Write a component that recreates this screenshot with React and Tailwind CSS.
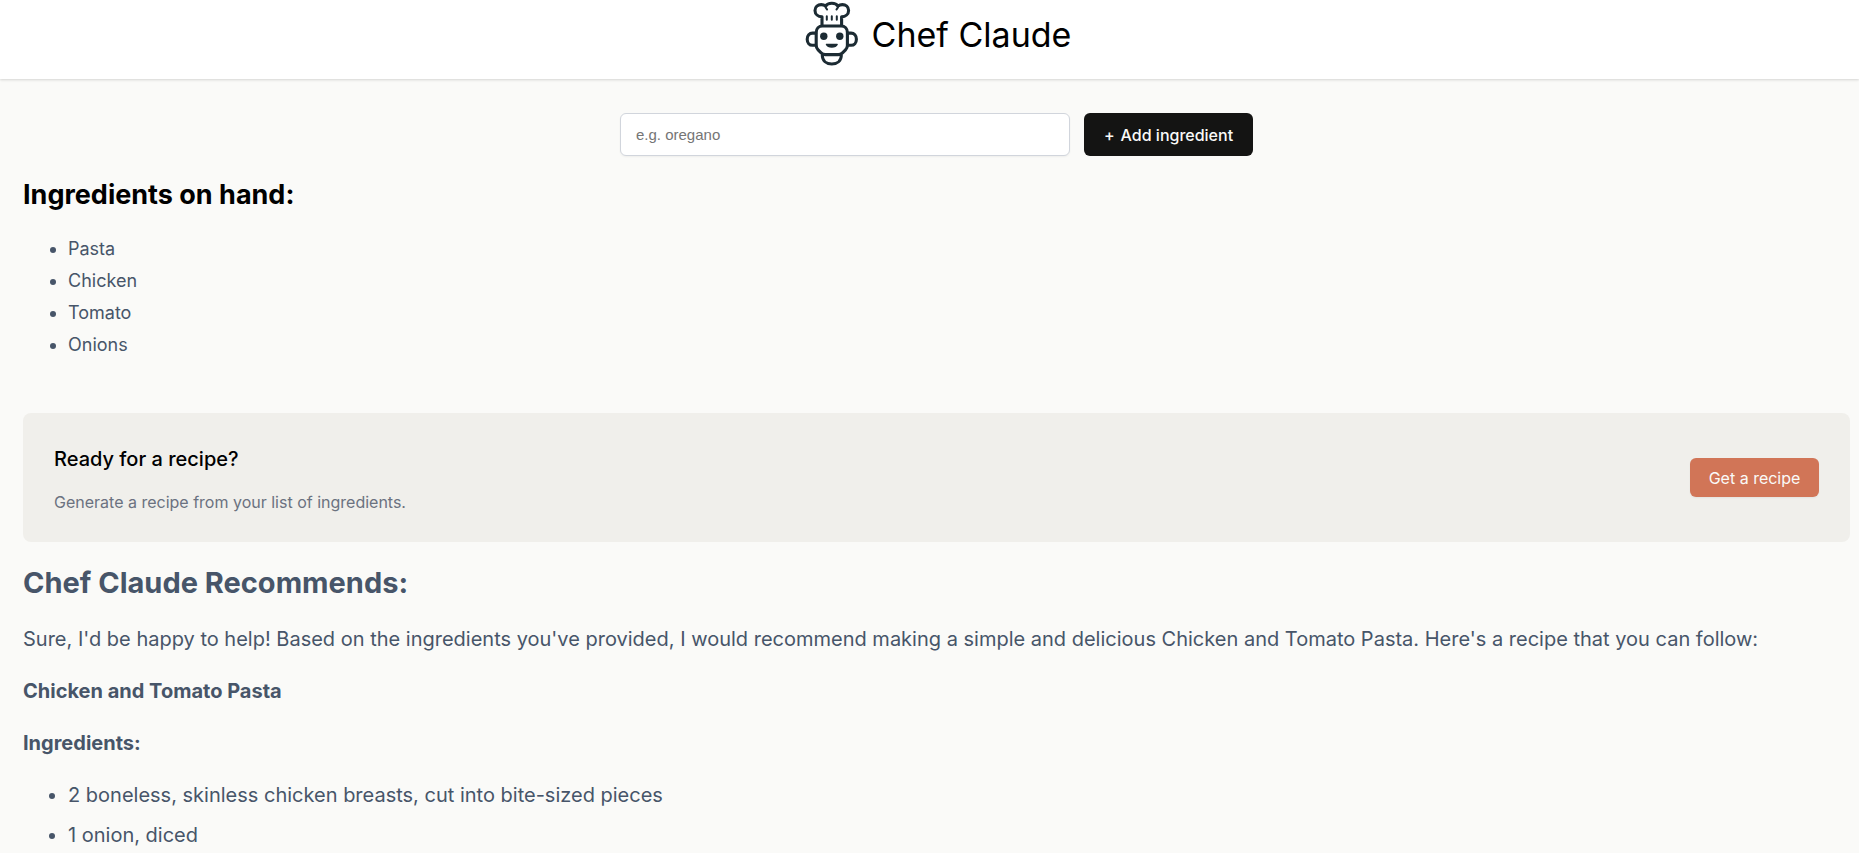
import React from "react";

const ingredients = ["Pasta", "Chicken", "Tomato", "Onions"];

const recipeIngredients = [
  "2 boneless, skinless chicken breasts, cut into bite-sized pieces",
  "1 onion, diced",
];

function ChefLogo() {
  return (
    <svg
      viewBox="0 0 56 66"
      className="h-[66px] w-[56px]"
      fill="none"
      stroke="#1c2b33"
      strokeWidth="3.1"
      strokeLinecap="round"
      strokeLinejoin="round"
      aria-hidden="true"
    >
      <path d="M18 25.500V16.800C14 16.600 11 14 11 10.400C11 6.800 13.900 4.600 17.200 4.600C19 4.600 20.400 5.100 21.600 6.100C22.700 4.200 25 3.200 27.800 3.200C30.600 3.200 32.900 4.200 34 6.100C35.200 5.100 36.600 4.600 38.400 4.600C41.700 4.600 44.600 6.800 44.600 10.400C44.600 14 41.600 16.600 37.600 16.800V25.500" />
      <path d="M21.600 6.100C21.500 7.600 22 8.600 23 9.300M34 6.100C34.100 7.600 33.600 8.600 32.600 9.300" strokeWidth="2.200" />
      <path d="M22.800 16.300V19.800M27.800 16.300V19.800M32.800 16.300V19.800" strokeWidth="2" />
      <path d="M18.500 26H37.100C40.800 26 43.400 28.800 43.400 32.600V45.500C43.400 47.500 42.700 48.600 41.500 49.800L38.500 52.800C37.200 54.100 36 54.600 34.200 54.600H21.400C19.600 54.600 18.400 54.100 17.100 52.800L14.100 49.800C12.900 48.600 12.200 47.500 12.200 45.500V32.600C12.200 28.800 14.800 26 18.500 26Z" />
      <path d="M11.800 33.100H8.500C5.500 33.100 3.200 35.500 3.200 39.200C3.200 42.900 5.500 45.300 8.500 45.300H11.800" />
      <path d="M43.800 33.100H47.100C50.100 33.100 52.400 35.500 52.400 39.200C52.400 42.900 50.100 45.300 47.100 45.300H43.800" />
      <path d="M18.300 55.200C18.300 60.600 22.300 64 27.800 64C33.300 64 37.300 60.600 37.300 55.200" />
      <circle cx="19.800" cy="36.300" r="3.700" fill="#1c2b33" stroke="none" />
      <circle cx="35.800" cy="36.300" r="3.700" fill="#1c2b33" stroke="none" />
      <path d="M22.500 44.400H33.100C32.200 46.300 30.600 47 27.800 47C25 47 23.400 46.300 22.500 44.400Z" fill="#1c2b33" strokeWidth="1.500" />
    </svg>
  );
}

function Header() {
  return (
    <header className="flex h-[79px] items-start justify-center gap-3 bg-white pl-4 shadow-[0_1px_3px_0_rgba(0,0,0,0.1),0_1px_2px_0_rgba(0,0,0,0.06)]">
      <ChefLogo />
      <h1 className="pt-[13px] text-[34px] leading-[44px] font-normal">Chef Claude</h1>
    </header>
  );
}

function IngredientForm() {
  return (
    <form className="flex justify-center gap-3.5" onSubmit={(e) => e.preventDefault()}>
      <input
        type="text"
        aria-label="Add ingredient"
        placeholder="e.g. oregano"
        className="h-[43px] w-[450px] rounded-md border border-gray-300 bg-white px-[15px] font-['Liberation_Sans',sans-serif] text-[15px] shadow-[0_1px_2px_0_rgba(0,0,0,0.05)] placeholder:text-[#757575]"
      />
      <button className="flex h-[43px] w-[169px] items-center justify-center gap-1.5 rounded-md bg-[#141413] text-[16px] font-medium text-[#fafaf8]">
        <span>+</span>
        <span>Add ingredient</span>
      </button>
    </form>
  );
}

export default function App() {
  return (
    <div className="min-h-screen bg-[#fafaf8] font-[Inter,sans-serif] text-black">
      <Header />
      <main className="pt-[34px] pr-[9px] pb-4 pl-[23px]">
        <IngredientForm />

        <section>
          <h2 className="mt-[21px] text-[27px] leading-9 font-bold">Ingredients on hand:</h2>
          <ul className="mt-5 list-disc pl-[45px] text-[18px] leading-8 text-[#475569]">
            {ingredients.map((name) => (
              <li key={name}>{name}</li>
            ))}
          </ul>
          <div className="mt-[52px] flex items-center justify-between rounded-lg bg-[#f0efeb] px-[31px] py-[31px]">
            <div>
              <h3 className="text-[20px] leading-[30px] font-medium">Ready for a recipe?</h3>
              <p className="mt-[19px] text-[16px] leading-[18px] text-[#6b7280]">
                Generate a recipe from your list of ingredients.
              </p>
            </div>
            <button className="h-[39px] w-[129px] rounded-md bg-[#d17557] text-[16px] text-[#fafaf8] shadow-[0_1px_2px_0_rgba(0,0,0,0.05)]">
              Get a recipe
            </button>
          </div>
        </section>

        <section className="text-[20px] leading-8 text-[#475569]">
          <h2 className="mt-[21px] text-[29px] leading-10 font-bold">Chef Claude Recommends:</h2>
          <p className="mt-5">
            Sure, I'd be happy to help! Based on the ingredients you've provided, I would recommend making a simple and
            delicious Chicken and Tomato Pasta. Here's a recipe that you can follow:
          </p>
          <p className="mt-5">
            <strong className="font-bold">Chicken and Tomato Pasta</strong>
          </p>
          <p className="mt-5">
            <strong className="font-bold">Ingredients:</strong>
          </p>
          <ul className="mt-4 list-disc pl-[45px] leading-10">
            {recipeIngredients.map((item) => (
              <li key={item}>{item}</li>
            ))}
          </ul>
        </section>
      </main>
    </div>
  );
}
